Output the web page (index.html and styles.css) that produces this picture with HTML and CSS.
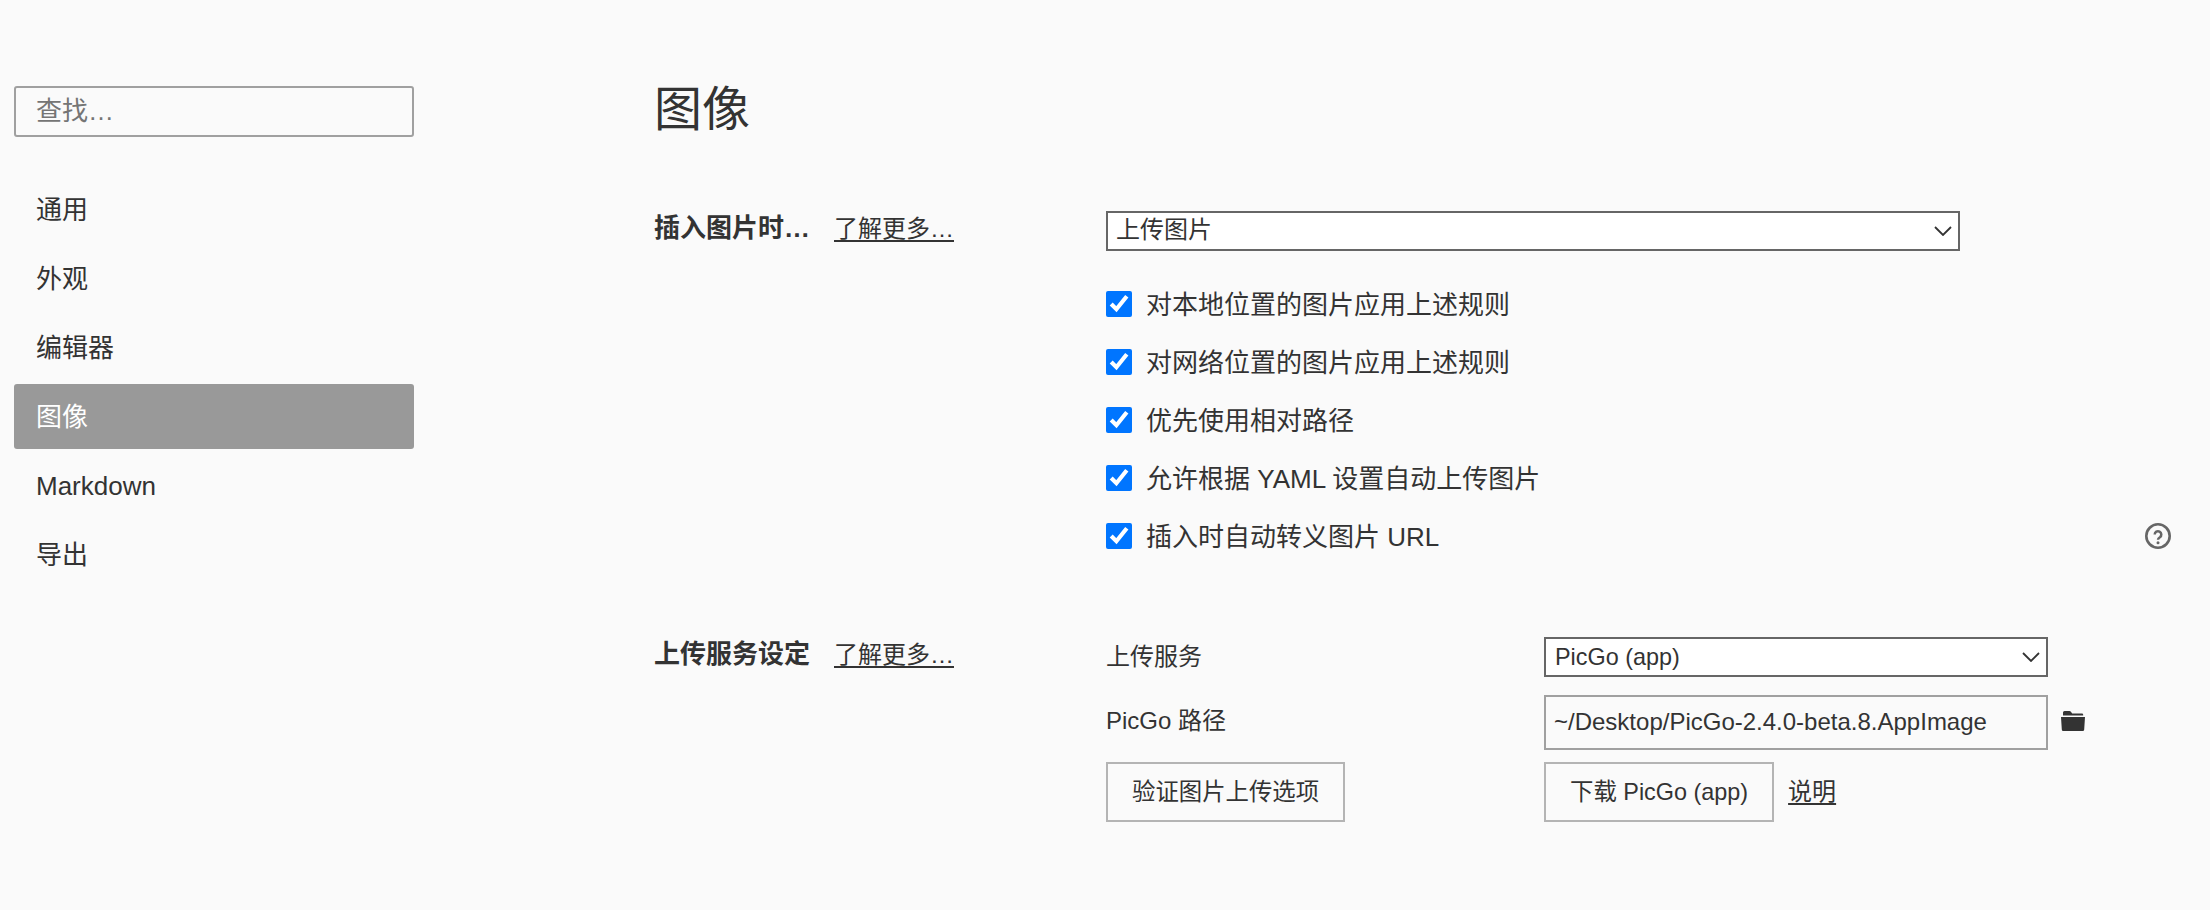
FILE: index.html
```html
<!DOCTYPE html>
<html lang="zh-CN">
<head>
<meta charset="utf-8">
<title>偏好设置</title>
<link rel="stylesheet" href="styles.css">
</head>
<body>
<div class="page">
  <aside class="sidebar">
    <input class="search" type="text" placeholder="查找…">
    <nav class="nav">
      <a class="nav-item">通用</a>
      <a class="nav-item">外观</a>
      <a class="nav-item">编辑器</a>
      <a class="nav-item active">图像</a>
      <a class="nav-item">Markdown</a>
      <a class="nav-item">导出</a>
    </nav>
  </aside>
  <main class="main">
    <h1 class="title">图像</h1>
    <section class="section first">
      <div class="section-head"><strong class="section-title">插入图片时…</strong><a class="more">了解更多…</a></div>
      <div class="section-body">
        <div class="select-wrap wide">
          <select class="select"><option>上传图片</option></select>
          <svg class="chevron" viewBox="0 0 18 10" width="18" height="10"><path d="M1 1l8 8 8-8" fill="none" stroke="#333" stroke-width="1.800"/></svg>
        </div>
        <div class="checks">
          <label class="check"><input type="checkbox" checked><span>对本地位置的图片应用上述规则</span></label>
          <label class="check"><input type="checkbox" checked><span>对网络位置的图片应用上述规则</span></label>
          <label class="check"><input type="checkbox" checked><span>优先使用相对路径</span></label>
          <label class="check"><input type="checkbox" checked><span>允许根据 YAML 设置自动上传图片</span></label>
          <label class="check"><input type="checkbox" checked><span>插入时自动转义图片 URL</span>
            <svg class="help" viewBox="0 0 26 26" width="26" height="26"><circle cx="13" cy="13" r="11.700" fill="none" stroke="#666" stroke-width="2.600"/><path d="M9.700 11.500a3.300 3.300 0 1 1 5.200 2.700c-1.200.8-1.900 1.300-1.900 2.600" fill="none" stroke="#666" stroke-width="2.500"/><circle cx="13" cy="19.800" r="1.500" fill="#666"/></svg>
          </label>
        </div>
      </div>
    </section>
    <section class="section second">
      <div class="section-head"><strong class="section-title">上传服务设定</strong><a class="more">了解更多…</a></div>
      <div class="service-grid">
        <span class="field-label">上传服务</span>
        <div class="select-wrap">
          <select class="select small"><option>PicGo (app)</option></select>
          <svg class="chevron" viewBox="0 0 18 10" width="18" height="10"><path d="M1 1l8 8 8-8" fill="none" stroke="#333" stroke-width="1.800"/></svg>
        </div>
        <span class="field-label path-label">PicGo 路径</span>
        <div class="path-row">
          <input class="path" type="text" value="~/Desktop/PicGo-2.4.0-beta.8.AppImage">
          <svg class="folder" viewBox="0 0 24 20" width="24" height="20"><path d="M3.500 0h5c.6 0 1 .3 1.400.7L11.200 2.500h9.800a1.200 1.200 0 0 1 1.200 1.200V4.500H2V1.500A1.500 1.500 0 0 1 3.500 0zM0 6h24l-.8 12.400c-.1 1-.8 1.600-1.800 1.600H2.600c-1 0-1.700-.6-1.800-1.600z" fill="#333"/></svg>
        </div>
        <div class="cell"><button class="btn" type="button">验证图片上传选项</button></div>
        <div class="cell"><button class="btn" type="button">下载 PicGo (app)</button><a class="link">说明</a></div>
      </div>
    </section>
  </main>
</div>
</body>
</html>
```
FILE: styles.css
```css
* { box-sizing: border-box; }
html, body { margin: 0; height: 100%; }
body {
  background: #fafafa;
  color: #333;
  font-family: "Liberation Sans", "Noto Sans CJK SC", sans-serif;
  font-size: 26px;
  line-height: 36px;
  overflow: hidden;
}
.page { display: flex; height: 910px; }
.sidebar { width: 654px; flex: none; padding: 86px 0 0 14px; }
.search {
  display: block;
  width: 400px;
  height: 51px;
  border: 2px solid #a0a0a0;
  border-radius: 3px;
  background: #fafafa;
  padding: 0 20px;
  font: 26px/36px "Liberation Sans", "Noto Sans CJK SC", sans-serif;
  color: #333;
  outline: none;
}
.search::placeholder { color: #757575; opacity: 1; }
.nav { display: flex; flex-direction: column; gap: 4px; margin-top: 40px; width: 400px; }
.nav-item {
  display: flex;
  align-items: center;
  height: 65px;
  padding-left: 22px;
  border-radius: 3px;
}
.nav-item.active { background: #999; color: #fff; }
.main { flex: 1; padding-right: 39px; }
.title { margin: 77px 0 0; font-size: 48px; line-height: 66px; font-weight: 400; }
.section { display: grid; grid-template-columns: 452px 1fr; }
.first { margin-top: 68px; }
.second { margin-top: 85px; }
.section-head { display: flex; align-items: baseline; height: 34px; line-height: 34px; }
.section-title { font-weight: 700; width: 180px; white-space: nowrap; }
.more { font-size: 24px; text-decoration: underline; text-underline-offset: 3px; }
.select-wrap { position: relative; }
.select-wrap.wide { width: 854px; }
.select {
  display: block;
  appearance: none;
  width: 100%;
  height: 40px;
  border: 2px solid #666;
  border-radius: 0;
  background: #fff;
  color: #333;
  padding: 0 8px 2px;
  font: 24px/32px "Liberation Sans", "Noto Sans CJK SC", sans-serif;
  outline: none;
}
.select.small { font-size: 23.4px; padding: 0 9px; }
.chevron { position: absolute; right: 8px; top: 15px; pointer-events: none; }
.checks { display: flex; flex-direction: column; gap: 26px; margin-top: 37px; }
.check { display: flex; align-items: center; height: 32px; }
.check input { width: 26px; height: 26px; margin: 0 14px 0 0; accent-color: #0075ff; flex: none; }
.check span { padding-top: 2px; }
.help { margin-left: auto; }
.service-grid {
  display: grid;
  grid-template-columns: 438px auto;
  row-gap: 12px;
  justify-content: start;
  align-items: center;
}
.field-label { font-size: 24px; }
.path-label { padding-top: 2px; }
.service-grid > .select-wrap { width: 504px; }
.path-row { display: flex; align-items: center; gap: 13px; margin-top: 6px; }
.folder { margin-bottom: 3px; }
.path {
  width: 504px;
  height: 55px;
  border: 2px solid #a0a0a0;
  border-radius: 0;
  background: #fafafa;
  color: #333;
  padding: 0 8px 2px;
  font: 24px/32px "Liberation Sans", "Noto Sans CJK SC", sans-serif;
  outline: none;
}
.cell { display: flex; align-items: center; gap: 14px; }
.btn {
  height: 60px;
  padding: 0 24px;
  border: 2px solid #b4b4b4;
  border-radius: 0;
  background: #fafafa;
  color: #333;
  font: 23.4px/32px "Liberation Sans", "Noto Sans CJK SC", sans-serif;
}
.link { font-size: 24px; text-decoration: underline; text-underline-offset: 3px; }
```
